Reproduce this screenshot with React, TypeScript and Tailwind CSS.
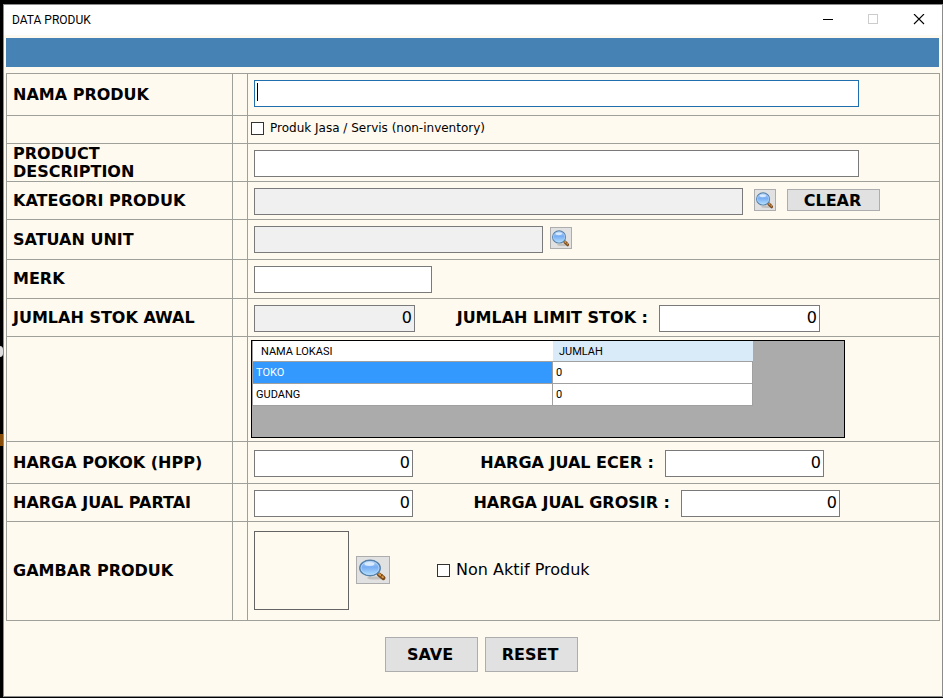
import React from "react";

const fieldBase =
  "block h-[27px] min-w-0 rounded-none border border-[#7a7a7a] px-0.5 pb-0.5 text-[16px] leading-5 text-black outline-none";
const buttonBase = "flex shrink-0 items-center justify-center border border-[#adadad] bg-[#e1e1e1]";

function Row({
  label,
  htmlFor,
  height,
  cell,
  children,
}: {
  label?: string;
  htmlFor?: string;
  height: string;
  cell: string;
  children: React.ReactNode;
}) {
  return (
    <div className={`flex border-b border-[#a0a09a] ${height}`}>
      <div className="flex w-[226px] shrink-0 items-center border-r border-[#a0a09a] pl-1.5 pr-4">
        {label && (
          <label htmlFor={htmlFor} className="text-[16px] font-bold leading-[18px]">
            {label}
          </label>
        )}
      </div>
      <div className="w-[15px] shrink-0 border-r border-[#a0a09a]" />
      <div className={`flex min-w-0 flex-1 items-start ${cell}`}>{children}</div>
    </div>
  );
}

function NumberField({ id, className }: { id: string; className: string }) {
  return <input id={id} type="text" defaultValue="0" className={`${fieldBase} text-right ${className}`} />;
}

function SideLabel({ htmlFor, width, children }: { htmlFor: string; width: string; children: React.ReactNode }) {
  return (
    <label
      htmlFor={htmlFor}
      className={`${width} shrink-0 whitespace-nowrap pr-[11px] text-right text-[16px] font-bold leading-[26px]`}
    >
      {children}
    </label>
  );
}

function Magnifier({ id, width, height }: { id: string; width: number; height: number }) {
  return (
    <svg width={width} height={height} viewBox="0 0 28 22" preserveAspectRatio="none" aria-hidden="true">
      <defs>
        <linearGradient id={`${id}-lens`} x1="0" y1="0" x2="0" y2="1">
          <stop offset="0" stopColor="#a9cdfb" />
          <stop offset="0.45" stopColor="#79aef3" />
          <stop offset="1" stopColor="#b4e2ff" />
        </linearGradient>
      </defs>
      <ellipse cx="16" cy="19" rx="8" ry="1.6" fill="#c4c2be" />
      <path d="M17.5 13.5l3 2.4" stroke="#8b8f99" strokeWidth="2.2" />
      <path d="M19.8 15.4l4.6 3.6" stroke="#7a4a1c" strokeWidth="4.2" strokeLinecap="round" />
      <path d="M20 15l4 3.2" stroke="#dc9c4c" strokeWidth="1.8" strokeLinecap="round" />
      <path d="M21.6 18l1.8-2.6" stroke="#6b3f14" strokeWidth="1" />
      <ellipse cx="11" cy="9" rx="10.2" ry="7.8" fill={`url(#${id}-lens)`} stroke="#5580a8" strokeWidth="1.5" />
      <ellipse cx="11" cy="9" rx="9" ry="6.6" fill="none" stroke="#b9d8f8" strokeWidth="0.8" />
      <ellipse cx="10.5" cy="5" rx="5" ry="1.9" fill="#e6f2ff" opacity="0.85" />
    </svg>
  );
}

function TitleBar() {
  return (
    <header className="flex h-[30px] items-center bg-white pl-2 font-['Roboto','Noto_Sans',sans-serif]">
      <h1 className="flex-1 text-[12px] leading-4">DATA PRODUK</h1>
      <button type="button" aria-label="Minimize" className="flex h-full w-[46px] items-center justify-center">
        <svg width="12" height="12" viewBox="0 0 12 12" shapeRendering="crispEdges">
          <path d="M2 5.5h10" stroke="#000" />
        </svg>
      </button>
      <button type="button" aria-label="Maximize" disabled className="flex h-full w-[46px] items-center justify-center">
        <svg width="12" height="12" viewBox="0 0 12 12">
          <rect x="1.5" y="0.5" width="9" height="9" fill="none" stroke="#ccc" />
        </svg>
      </button>
      <button type="button" aria-label="Close" className="flex h-full w-[46px] items-center justify-center">
        <svg width="12" height="12" viewBox="0 0 12 12">
          <path d="M1 0l10 10M11 0L1 10" stroke="#000" strokeWidth="1.1" />
        </svg>
      </button>
    </header>
  );
}

function StockGrid() {
  return (
    <div className="h-[98px] w-[594px] border border-black bg-[#ababab] font-['Roboto','Noto_Sans',sans-serif] text-[11px] leading-4">
      <table className="w-[501px] table-fixed border-separate border-spacing-0 text-left">
        <thead>
          <tr className="h-[21px]">
            <th className="w-[301px] border-b border-l border-[#a0a0a0] bg-white p-0 pl-2 pt-0.5 font-normal">
              NAMA LOKASI
            </th>
            <th className="border-b border-[#a0a0a0] bg-[#d9ebf9] p-0 pl-1.5 pt-0.5 font-normal">JUMLAH</th>
          </tr>
        </thead>
        <tbody>
          <tr className="h-[22px]">
            <td className="border-b border-l border-r border-[#a0a0a0] bg-[#3399ff] p-0 pl-[3px] text-white">TOKO</td>
            <td className="border-b border-r border-[#a0a0a0] bg-white p-0 pl-[3px]">0</td>
          </tr>
          <tr className="h-[22px]">
            <td className="border-b border-l border-r border-[#a0a0a0] bg-white p-0 pl-[3px]">GUDANG</td>
            <td className="border-b border-r border-[#a0a0a0] bg-white p-0 pl-[3px]">0</td>
          </tr>
        </tbody>
      </table>
    </div>
  );
}

export default function App() {
  return (
    <div className="relative flex min-h-screen flex-col overflow-hidden bg-black pb-px pl-[3px] pt-1 font-['DejaVu_Sans',sans-serif] text-black">
      <span className="absolute -left-1 top-[346px] h-[11px] w-[7px] rounded-full bg-[#dedede]" />
      <span className="absolute left-0 top-[434px] h-3 w-[3px] bg-[#8a4f0a]" />
      <div className="flex flex-1 flex-col border border-[#8c8c8c] bg-[#fffaf0]">
        <TitleBar />
        <main className="px-0.5 pt-[3px]">
          <div className="mr-px h-[29px] bg-[#4682b4]" />
          <form className="mt-1.5" onSubmit={(e) => e.preventDefault()}>
            <div className="border-l border-r border-t border-[#a0a09a]">
              <Row label="NAMA PRODUK" htmlFor="nama" height="h-[42px]" cell="pl-1.5 pt-1.5">
                <div className="relative w-full max-w-[605px]">
                  <input
                    id="nama"
                    type="text"
                    className="block h-[27px] w-full rounded-none border border-[#1f6fae] bg-white px-0.5 text-[16px] leading-5 outline-none"
                  />
                  <span className="absolute left-[3px] top-[3px] h-[18px] w-px bg-black" />
                </div>
              </Row>
              <Row height="h-[28px]" cell="pl-[3px] pt-1.5">
                <label className="flex items-center gap-1.5 text-[12px] leading-[13px]">
                  <input type="checkbox" className="size-[13px] appearance-none border border-[#333] bg-white" />
                  Produk Jasa / Servis (non-inventory)
                </label>
              </Row>
              <Row label="PRODUCT DESCRIPTION" htmlFor="deskripsi" height="h-[38px]" cell="pl-1.5 pt-1.5">
                <input id="deskripsi" type="text" className={`${fieldBase} w-full max-w-[605px] bg-white`} />
              </Row>
              <Row label="KATEGORI PRODUK" htmlFor="kategori" height="h-[38px]" cell="pl-1.5 pt-1.5">
                <input id="kategori" type="text" readOnly className={`${fieldBase} w-[489px] bg-[#f0f0f0]`} />
                <button type="button" aria-label="Cari kategori" className={`${buttonBase} ml-[11px] mt-px size-[22px]`}>
                  <Magnifier id="kategori" width={18} height={17} />
                </button>
                <button
                  type="button"
                  className={`${buttonBase} ml-[11px] mt-px h-[22px] w-[93px] pr-0.5 pt-0.5 text-[16px] font-bold leading-5`}
                >
                  CLEAR
                </button>
              </Row>
              <Row label="SATUAN UNIT" htmlFor="satuan" height="h-[40px]" cell="pl-1.5 pt-1.5">
                <input id="satuan" type="text" readOnly className={`${fieldBase} w-[289px] bg-[#f0f0f0]`} />
                <button type="button" aria-label="Cari satuan" className={`${buttonBase} ml-[7px] mt-px size-[22px]`}>
                  <Magnifier id="satuan" width={18} height={17} />
                </button>
              </Row>
              <Row label="MERK" htmlFor="merk" height="h-[39px]" cell="pl-1.5 pt-1.5">
                <input id="merk" type="text" className={`${fieldBase} w-[178px] bg-white`} />
              </Row>
              <Row label="JUMLAH STOK AWAL" htmlFor="stok" height="h-[38px]" cell="pl-1.5 pt-1.5">
                <NumberField id="stok" className="w-[161px] bg-[#f0f0f0]" />
                <SideLabel htmlFor="limit" width="w-[244px]">
                  JUMLAH LIMIT STOK :
                </SideLabel>
                <NumberField id="limit" className="w-[161px] bg-white" />
              </Row>
              <Row height="h-[105px]" cell="pl-[3px] pt-[3px]">
                <StockGrid />
              </Row>
              <Row label="HARGA POKOK (HPP)" htmlFor="hpp" height="h-[42px]" cell="pl-1.5 pt-2">
                <NumberField id="hpp" className="w-[159px] bg-white" />
                <SideLabel htmlFor="ecer" width="w-[252px]">
                  HARGA JUAL ECER :
                </SideLabel>
                <NumberField id="ecer" className="w-[159px] bg-white" />
              </Row>
              <Row label="HARGA JUAL PARTAI" htmlFor="partai" height="h-[38px]" cell="pl-1.5 pt-1.5">
                <NumberField id="partai" className="w-[159px] bg-white" />
                <SideLabel htmlFor="grosir" width="w-[268px]">
                  HARGA JUAL GROSIR :
                </SideLabel>
                <NumberField id="grosir" className="w-[159px] bg-white" />
              </Row>
              <Row label="GAMBAR PRODUK" htmlFor="gambar" height="h-[99px]" cell="pb-0.5 pl-1.5">
                <div className="h-[79px] w-[95px] self-center border border-[#646464]" />
                <button
                  id="gambar"
                  type="button"
                  aria-label="Pilih gambar"
                  className={`${buttonBase} ml-[7px] h-7 w-[34px] self-center`}
                >
                  <Magnifier id="gambar-icon" width={28} height={22} />
                </button>
                <label className="ml-[47px] flex items-center gap-1.5 self-center text-[16px] leading-5">
                  <input type="checkbox" className="size-[13px] appearance-none border border-[#333] bg-white" />
                  Non Aktif Produk
                </label>
              </Row>
            </div>
            <div className="flex justify-center gap-[7px] pb-6 pl-4 pt-4 text-[16px] font-bold leading-5">
              <button type="submit" className={`${buttonBase} h-[35px] w-[93px] pr-0.5`}>
                SAVE
              </button>
              <button type="reset" className={`${buttonBase} h-[35px] w-[93px] pr-0.5`}>
                RESET
              </button>
            </div>
          </form>
        </main>
      </div>
    </div>
  );
}
